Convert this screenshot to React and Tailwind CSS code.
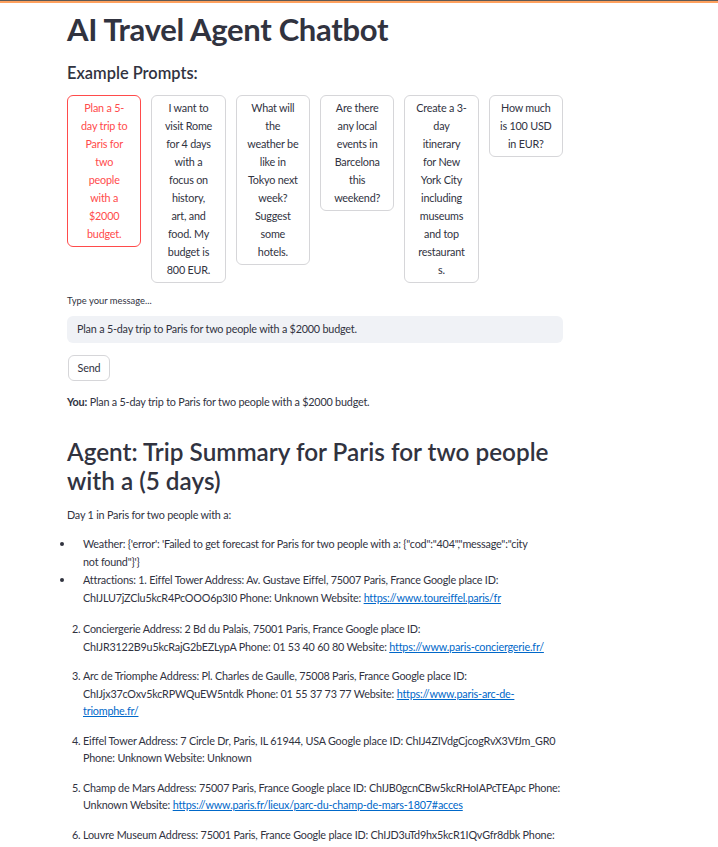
import React from "react";

// line breaks as they fall in the narrow column buttons
const prompts = [
  ["Plan a 5-", "day trip to", "Paris for", "two", "people", "with a", "$2000", "budget."],
  ["I want to", "visit Rome", "for 4 days", "with a", "focus on", "history,", "art, and", "food. My", "budget is", "800 EUR."],
  ["What will", "the", "weather be", "like in", "Tokyo next", "week?", "Suggest", "some", "hotels."],
  ["Are there", "any local", "events in", "Barcelona", "this", "weekend?"],
  ["Create a 3-", "day", "itinerary", "for New", "York City", "including", "museums", "and top", "restaurant", "s."],
  ["How much", "is 100 USD", "in EUR?"],
];

const Link = ({ href }) => (
  <a href={href} className="text-[#0068c9] underline decoration-[#0068c9]">
    {href}
  </a>
);

const body = "text-[10.8px] tracking-[-0.2px]";
const bullet =
  "relative before:absolute before:top-[7px] before:-left-[23px] before:size-[4px] before:rounded-full before:bg-[#31333f] before:content-['']";

export default function App() {
  return (
    <div className="min-h-screen bg-white text-[#31333f] font-[family-name:Lato,sans-serif]">
      <div className="h-[3px] border-t border-[#5f5a56] bg-[#ffa15e]" />
      <main className="ml-[67px] w-[496px] pt-[6px] pb-10">
        <h1 className="text-[31px] font-bold leading-[40px] tracking-[-0.01em]">AI Travel Agent Chatbot</h1>
        <h3 className="mt-[12px] text-[16.4px] font-semibold leading-[24px]">Example Prompts:</h3>

        <div className="mt-[10px] grid grid-cols-6 items-start gap-x-[10px]">
          {prompts.map((lines, i) => (
            <button
              key={i}
              className={
                i === 0
                  ? `rounded-[6px] border-[1.5px] border-[#ff4b4b] bg-white px-[4px] py-[3px] text-center leading-[18px] text-[#ff4b4b] ${body}`
                  : `rounded-[6px] border-[1.5px] border-[#d6d6d9] bg-white px-[4px] py-[3px] text-center leading-[18px] text-[#31333f] ${body}`
              }
            >
              {lines.map((l, j) => (
                <span key={j} className="block whitespace-nowrap">
                  {l}
                </span>
              ))}
            </button>
          ))}
        </div>

        <label className="mt-[11px] block text-[9.4px] leading-[14px]">Type your message...</label>
        <div className={`mt-[8px] flex h-[27px] items-center rounded-[6px] bg-[#f0f2f6] px-[10px] ${body}`}>
          Plan a 5-day trip to Paris for two people with a $2000 budget.
        </div>
        <button
          className={`mt-[12px] ml-px flex h-[26px] w-[42px] items-center justify-center rounded-[6px] border-[1.5px] border-[#d6d6d9] bg-white ${body}`}
        >
          Send
        </button>

        <p className={`mt-[12px] leading-[18px] ${body}`}>
          <span className="font-bold">You:</span> Plan a 5-day trip to Paris for two people with a $2000 budget.
        </p>

        <h2 className="mt-[26px] text-[24.3px] font-semibold leading-[29px]">
          Agent: Trip Summary for Paris for two people with a (5 days)
        </h2>

        <p className={`mt-[11px] leading-[18px] ${body}`}>Day 1 in Paris for two people with a:</p>

        <ul className={`mt-[11px] pl-[16px] leading-[18px] ${body}`}>
          <li className={bullet}>
            Weather: {"{'error': 'Failed to get forecast for Paris for two people with a: {\"cod\":\"404\",\"message\":\"city"}
            <br />
            {"not found\"}'}"}
          </li>
          <li className={bullet}>
            Attractions: 1. Eiffel Tower Address: Av. Gustave Eiffel, 75007 Paris, France Google place ID:
            ChIJLU7jZClu5kcR4PcOOO6p3I0 Phone: Unknown Website: <Link href="https://www.toureiffel.paris/fr" />
          </li>
        </ul>

        <ol start={2} className={`mt-[13px] list-decimal pl-[16px] leading-[17.5px] [&>li+li]:mt-[12px] ${body}`}>
          <li>
            Conciergerie Address: 2 Bd du Palais, 75001 Paris, France Google place ID: ChIJR3122B9u5kcRajG2bEZLypA
            Phone: 01 53 40 60 80 Website: <Link href="https://www.paris-conciergerie.fr/" />
          </li>
          <li>
            Arc de Triomphe Address: Pl. Charles de Gaulle, 75008 Paris, France Google place ID:
            ChIJjx37cOxv5kcRPWQuEW5ntdk Phone: 01 55 37 73 77 Website:{" "}
            <Link href="https://www.paris-arc-de-triomphe.fr/" />
          </li>
          <li>
            Eiffel Tower Address: 7 Circle Dr, Paris, IL 61944, USA Google place ID: ChIJ4ZIVdgCjcogRvX3VfJm_GR0
            Phone: Unknown Website: Unknown
          </li>
          <li>
            Champ de Mars Address: 75007 Paris, France Google place ID: ChIJB0gcnCBw5kcRHoIAPcTEApc Phone:
            Unknown Website: <Link href="https://www.paris.fr/lieux/parc-du-champ-de-mars-1807#acces" />
          </li>
          <li>
            Louvre Museum Address: 75001 Paris, France Google place ID: ChIJD3uTd9hx5kcR1IQvGfr8dbk Phone:
            Unknown Website: <Link href="https://www.louvre.fr/" />
          </li>
        </ol>
      </main>
    </div>
  );
}
